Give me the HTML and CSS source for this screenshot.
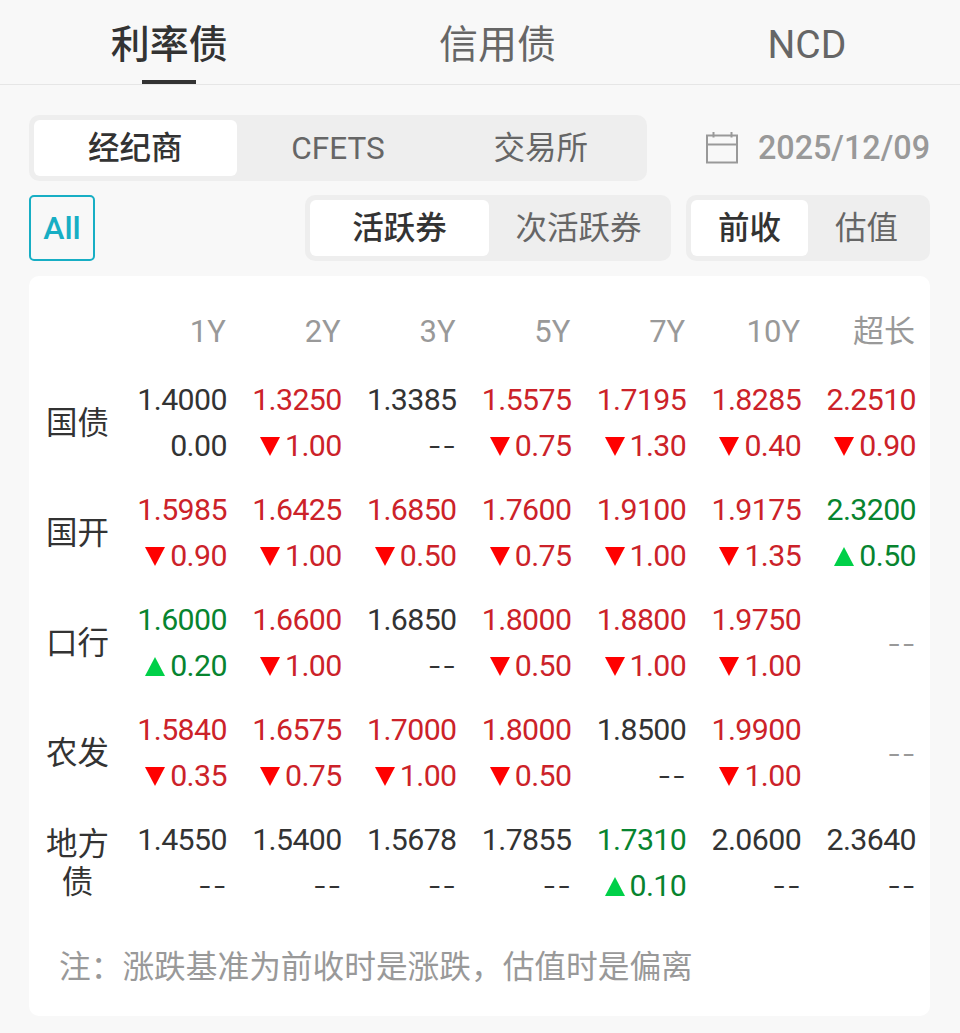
FILE: index.html
```html
<!DOCTYPE html>
<html lang="zh-CN">
<head>
    <meta charset="UTF-8">
    <meta name="viewport" content="width=device-width, initial-scale=1.0">
    <title>利率债</title>
    <link rel="stylesheet" href="styles.css">
</head>
<body>
    <nav class="tabs">
        <a class="tab active">利率债</a>
        <a class="tab">信用债</a>
        <a class="tab">NCD</a>
    </nav>

    <div class="toolbar">
        <div class="segment source">
            <button class="active">经纪商</button>
            <button>CFETS</button>
            <button>交易所</button>
        </div>
        <div class="date">
            <svg class="calendar" width="34" height="34" viewBox="0 0 34 34" fill="none" stroke="#999" stroke-width="2">
                <path d="M2 4.5H32V31.5H2ZM2 13.5H32M8.5 1V6.5M26.5 1V6.5"/>
            </svg>
            <span>2025/12/09</span>
        </div>
    </div>

    <div class="toolbar filters">
        <button class="all">All</button>
        <div class="segment bond">
            <button class="active">活跃券</button>
            <button>次活跃券</button>
        </div>
        <div class="segment base">
            <button class="active">前收</button>
            <button>估值</button>
        </div>
    </div>

    <div class="card">
        <table>
            <thead>
                <tr><th class="label"></th><th>1Y</th><th>2Y</th><th>3Y</th><th>5Y</th><th>7Y</th><th>10Y</th><th>超长</th></tr>
            </thead>
            <tbody id="rates"></tbody>
        </table>
        <p class="note">注：涨跌基准为前收时是涨跌，估值时是偏离</p>
    </div>

    <script>
        // [收益率, 涨跌bp]，null 表示无涨跌数据
        const rates = {
            "国债": [["1.4000", 0], ["1.3250", -1], ["1.3385", null], ["1.5575", -0.75], ["1.7195", -1.3], ["1.8285", -0.4], ["2.2510", -0.9]],
            "国开": [["1.5985", -0.9], ["1.6425", -1], ["1.6850", -0.5], ["1.7600", -0.75], ["1.9100", -1], ["1.9175", -1.35], ["2.3200", 0.5]],
            "口行": [["1.6000", 0.2], ["1.6600", -1], ["1.6850", null], ["1.8000", -0.5], ["1.8800", -1], ["1.9750", -1], null],
            "农发": [["1.5840", -0.35], ["1.6575", -0.75], ["1.7000", -1], ["1.8000", -0.5], ["1.8500", null], ["1.9900", -1], null],
            "地方债": [["1.4550", null], ["1.5400", null], ["1.5678", null], ["1.7855", null], ["1.7310", 0.1], ["2.0600", null], ["2.3640", null]]
        };

        function renderCell(cell) {
            if (!cell) {
                return '<td class="empty"><div class="diff"><span class="dash">--</span></div></td>';
            }
            const [rate, diff] = cell;
            let cls = "";
            if (diff < 0) cls = "down";
            if (diff > 0) cls = "up";
            const arrow = cls ? '<i class="arrow"></i>' : "";
            const text = diff === null ? '<span class="dash">--</span>' : Math.abs(diff).toFixed(2);
            return `<td class="${cls}"><div class="rate">${rate}</div><div class="diff">${arrow}${text}</div></td>`;
        }

        let html = "";
        for (const name in rates) {
            html += `<tr><td class="label"><div>${name}</div></td>${rates[name].map(renderCell).join("")}</tr>`;
        }
        document.getElementById("rates").innerHTML = html;
    </script>
</body>
</html>
```

FILE: styles.css
```css
* {
    box-sizing: border-box;
}

body {
    margin: 0;
    background-color: #f8f8f8;
    color: #333;
    font-family: Roboto, "Noto Sans CJK SC", sans-serif;
    font-size: 31px;
}

button {
    margin: 0;
    padding: 0;
    border: none;
    background: none;
    color: #666;
    font-family: inherit;
    font-size: 31.5px;
    line-height: 56px;
    cursor: pointer;
}

.tabs {
    display: flex;
    justify-content: space-around;
    height: 85px;
    padding: 0 8px 0 5px;
    border-bottom: 1px solid #e6e6e6;
}

.tab {
    display: flex;
    flex-direction: column;
    align-items: center;
    color: #666;
    font-size: 39px;
    line-height: 90px;
}

.tab.active {
    color: #333;
    font-weight: 500;
}

.tab.active::after {
    content: "";
    width: 54px;
    height: 4px;
    margin-top: -10px;
    background-color: #333;
}

.toolbar {
    display: flex;
    justify-content: space-between;
    align-items: center;
    padding: 30px 30px 0 29px;
}

.filters {
    padding-top: 14px;
}

.segment {
    display: flex;
    height: 66px;
    padding: 5px;
    border-radius: 10px;
    background-color: #eee;
}

.segment button {
    flex: 1;
    padding-top: 1px;
    line-height: 55px;
}

.segment .active {
    border-radius: 6px;
    background-color: #fff;
    color: #333;
    font-weight: 500;
}

.source {
    width: 618px;
}

.bond {
    width: 366px;
    margin-left: auto;
    margin-right: 15px;
}

.bond button {
    flex: none;
    width: 179px;
}

.base {
    width: 244px;
}

.date {
    display: flex;
    align-items: center;
    gap: 19px;
    color: #999;
    font-size: 32.3px;
    font-weight: 500;
}

.all {
    width: 66px;
    height: 66px;
    border: 2px solid #17aec4;
    border-radius: 5px;
    color: #17aec4;
    font-size: 32px;
    font-weight: 500;
    line-height: 60px;
}

.card {
    height: 740px;
    margin: 15px 30px 0 29px;
    padding: 28px 14px 0;
    border-radius: 10px;
    background-color: #fff;
}

table {
    width: 100%;
    table-layout: fixed;
    border-collapse: collapse;
}

th {
    height: 56px;
    padding: 0 1px 0 0;
    color: #999;
    font-weight: 400;
    line-height: 56px;
    text-align: right;
}

td {
    height: 110px;
    padding: 17px 0 0;
    text-align: right;
    vertical-align: top;
}

.label {
    width: 69px;
    text-align: center;
    font-size: 31.5px;
    line-height: 38px;
}

td.label {
    padding: 18px 0 0;
    vertical-align: middle;
}

.rate,
.diff {
    height: 46px;
    font-size: 30.3px;
    line-height: 46px;
    letter-spacing: -0.6px;
}

.diff {
    display: flex;
    justify-content: flex-end;
    align-items: center;
}

.down {
    color: #cc2229;
}

.up {
    color: #07842f;
}

.arrow {
    margin-right: 5px;
    border-left: 10.5px solid transparent;
    border-right: 10.5px solid transparent;
}

.down .arrow {
    border-top: 19px solid #f00;
}

.up .arrow {
    border-bottom: 19px solid #00d048;
}

.dash {
    margin: 0 -1px 10px 0;
    font-family: "Noto Sans CJK SC", sans-serif;
    font-size: 38px;
    font-weight: 300;
    letter-spacing: 2px;
}

.empty {
    vertical-align: middle;
    color: #999;
}

.note {
    margin: 30px 0 0 16px;
    color: #999;
    font-size: 31.7px;
    line-height: 56px;
}
```
